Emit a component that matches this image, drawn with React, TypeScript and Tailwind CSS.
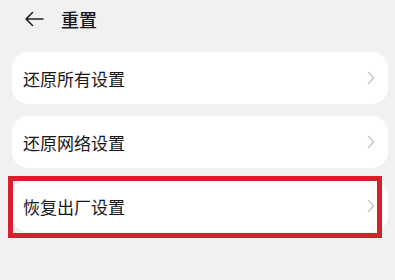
const items = ['还原所有设置', '还原网络设置', '恢复出厂设置']

function Chevron() {
  return (
    <svg width="8" height="14" viewBox="0 0 8 14" fill="none" className="shrink-0">
      <path d="M1.5 1.5L6.5 7L1.5 12.5" stroke="#c4c4c4" strokeWidth="1.3" strokeLinecap="round" strokeLinejoin="round" />
    </svg>
  )
}

export default function App() {
  return (
    <div
      className="h-[280px] w-[395px] overflow-hidden bg-[#f1f1f1] text-[#181818]"
      style={{ fontFamily: '"Noto Sans CJK SC", "Noto Sans", sans-serif' }}
    >
      {/* Header */}
      <div className="flex h-[36px] items-center pl-[24px] pt-[1px]">
        <svg width="20" height="16" viewBox="0 0 20 16" fill="none">
          <path d="M19 8H2M8.5 1.5L2 8L8.5 14.5" stroke="#222" strokeWidth="1.6" strokeLinecap="round" strokeLinejoin="round" />
        </svg>
        <span className="ml-[17px] text-[18px] leading-none font-medium">重置</span>
      </div>

      {/* List */}
      <div className="mt-[16px] flex flex-col gap-[12px] pl-[12px]">
        {items.map((label, i) => (
          <div key={label} className="relative">
            <div className="flex h-[52px] w-[376px] items-center justify-between rounded-[16px] bg-white pl-[11px] pr-[13px]">
              <span className="text-[17px] leading-none">{label}</span>
              <Chevron />
            </div>
            {i === 2 && (
              <div className="pointer-events-none absolute -top-[4px] -left-[4px] h-[62px] w-[374px] border-[5px] border-[#d8202c]" />
            )}
          </div>
        ))}
      </div>
    </div>
  )
}
